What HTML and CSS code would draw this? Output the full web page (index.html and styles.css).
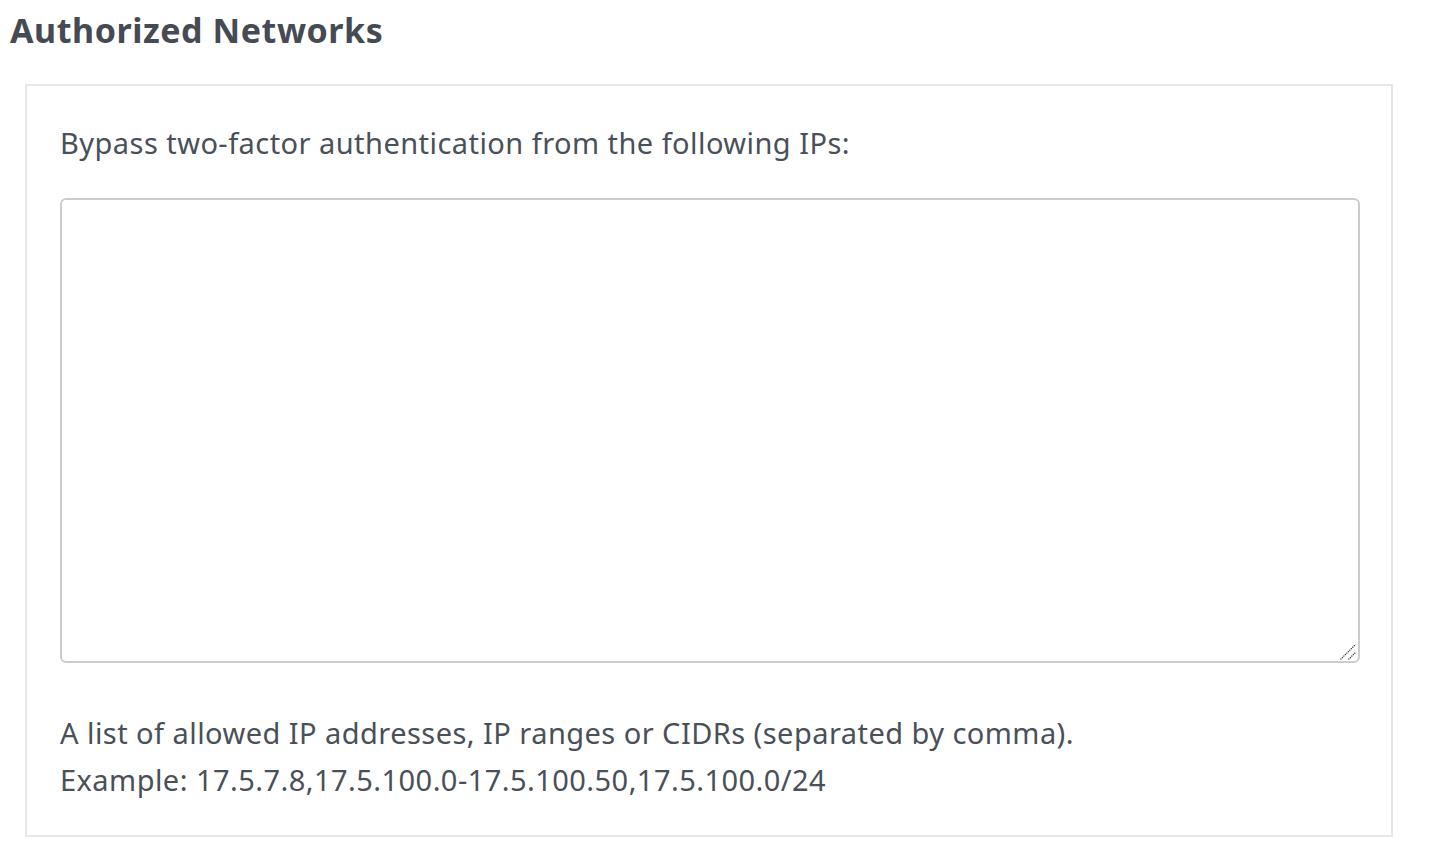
FILE: index.html
```html
<!DOCTYPE html>
<html>
<head>
<meta charset="utf-8">
<link rel="stylesheet" href="styles.css">
</head>
<body>
<h1 class="title">Authorized Networks</h1>
<div class="card">
  <p class="label">Bypass two-factor authentication from the following IPs:</p>
  <div class="field">
    <textarea class="ips"></textarea>
    <svg class="grip" width="18" height="18" viewBox="0 0 18 18">
      <line x1="1.5" y1="16.5" x2="16.5" y2="1.5" stroke="#333" stroke-width="1.2" stroke-dasharray="1.2 0.9"/>
      <line x1="9.5" y1="16.5" x2="16.5" y2="9.5" stroke="#333" stroke-width="1.2" stroke-dasharray="1.2 0.9"/>
    </svg>
  </div>
  <p class="help">A list of allowed IP addresses, IP ranges or CIDRs (separated by comma).<br>Example: 17.5.7.8,17.5.100.0-17.5.100.50,17.5.100.0/24</p>
</div>
</body>
</html>
```
FILE: styles.css
```css
html, body {
  margin: 0;
  padding: 0;
  background: #fff;
}
body {
  font-family: "Noto Sans", "Open Sans", sans-serif;
  color: #4a5058;
  width: 1442px;
}
.title {
  margin: 0;
  padding: 6px 0 0 10px;
  font-size: 34px;
  letter-spacing: 0.55px;
  line-height: 48px;
  font-weight: 700;
  color: #464b53;
}
.card {
  margin: 30px 0 0 25px;
  width: 1368px;
  box-sizing: border-box;
  border: 2px solid #e3e8ee;
  padding: 33px 33px 32px 33px;
}
.label {
  margin: 0 0 32px 0;
  font-size: 29px;
  letter-spacing: 0.45px;
  line-height: 47px;
}
.field {
  position: relative;
  width: 1300px;
  height: 465px;
}
.ips {
  display: block;
  width: 1300px;
  height: 465px;
  box-sizing: border-box;
  border: 2px solid #cccccc;
  border-radius: 6px;
  margin: 0;
  padding: 8px;
  font-family: inherit;
  font-size: 28px;
  resize: none;
  outline: none;
}
.grip {
  position: absolute;
  right: 3px;
  bottom: 2px;
}
.help {
  margin: 46px 0 0 0;
  font-size: 29px;
  letter-spacing: 0.45px;
  line-height: 47px;
}
```
